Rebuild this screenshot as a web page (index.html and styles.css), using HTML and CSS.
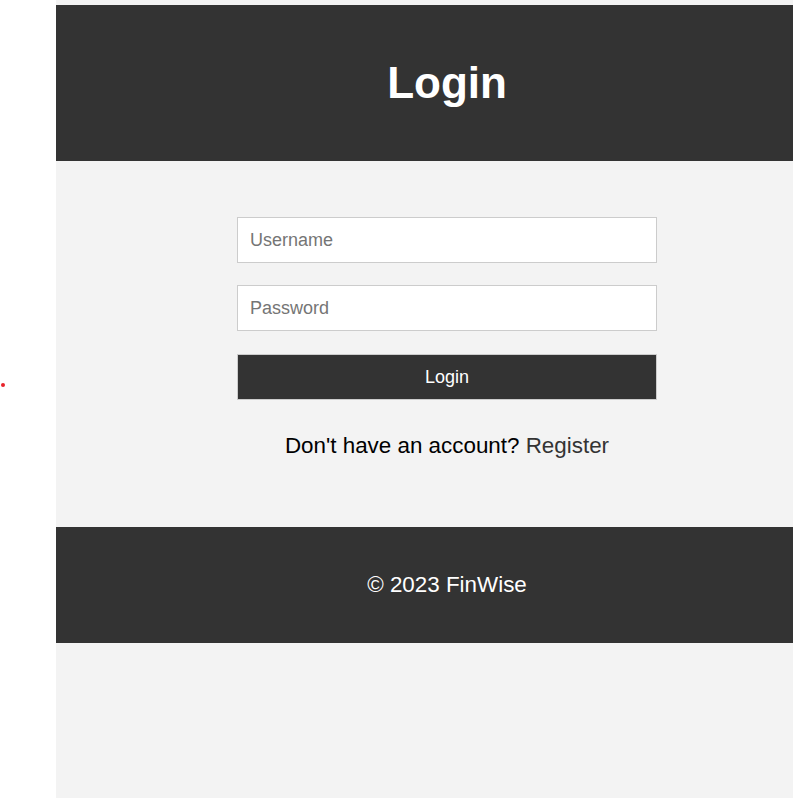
FILE: index.html
```html
<!DOCTYPE html>
<html lang="en">
<head>
<meta charset="utf-8">
<title>Login - FinWise</title>
<link rel="stylesheet" href="styles.css">
</head>
<body>
<span class="dot"></span>
<div class="page">
  <header class="site-header">
    <h1 class="title">Login</h1>
  </header>
  <main class="content">
    <form class="login-form">
      <input class="field" type="text" placeholder="Username">
      <input class="field" type="password" placeholder="Password">
      <button class="submit" type="button">Login</button>
    </form>
    <p class="signup">Don't have an account? <a class="signup-link" href="#">Register</a></p>
  </main>
  <footer class="site-footer">
    <p class="copy">&copy; 2023 FinWise</p>
  </footer>
</div>
</body>
</html>
```
FILE: styles.css
```css
html, body {
  margin: 0;
  padding: 0;
  background: #ffffff;
  font-family: "Liberation Sans", Arial, sans-serif;
}

.dot {
  position: absolute;
  left: 1px;
  top: 383px;
  width: 4px;
  height: 4px;
  border-radius: 50%;
  background: #e8232a;
}

.page {
  margin-left: 56px;
  min-height: 798px;
  padding-top: 5px;
  box-sizing: border-box;
  background: #f3f3f3;
}

.site-header {
  height: 156px;
  padding-left: 45px;
  background: #333333;
  display: flex;
  align-items: center;
  justify-content: center;
}

.title {
  margin: 0;
  color: #ffffff;
  font-size: 44px;
  font-weight: bold;
  line-height: 1;
}

.content {
  padding: 56px 0 68px 45px;
}

.login-form {
  width: 420px;
  margin: 0 auto;
  display: flex;
  flex-direction: column;
}

.field {
  height: 46px;
  box-sizing: border-box;
  border: 1px solid #cccccc;
  background: #ffffff;
  padding: 0 12px;
  font-family: inherit;
  font-size: 18px;
  color: #333;
  margin: 0 0 22px 0;
  outline: none;
}

.field::placeholder {
  color: #757575;
}

.submit {
  margin-top: 1px;
  height: 46px;
  box-sizing: border-box;
  border: 1px solid #cccccc;
  background: #333333;
  color: #ffffff;
  font-family: inherit;
  font-size: 18px;
  cursor: pointer;
}

.signup {
  margin: 33px 0 0;
  text-align: center;
  font-size: 22.4px;
  line-height: 26px;
  color: #000000;
}

.signup-link {
  color: #333333;
  text-decoration: none;
}

.site-footer {
  height: 116px;
  padding-left: 45px;
  background: #333333;
  display: flex;
  align-items: center;
  justify-content: center;
}

.copy {
  margin: 0;
  color: #ffffff;
  font-size: 22.4px;
  line-height: 26px;
}
```
